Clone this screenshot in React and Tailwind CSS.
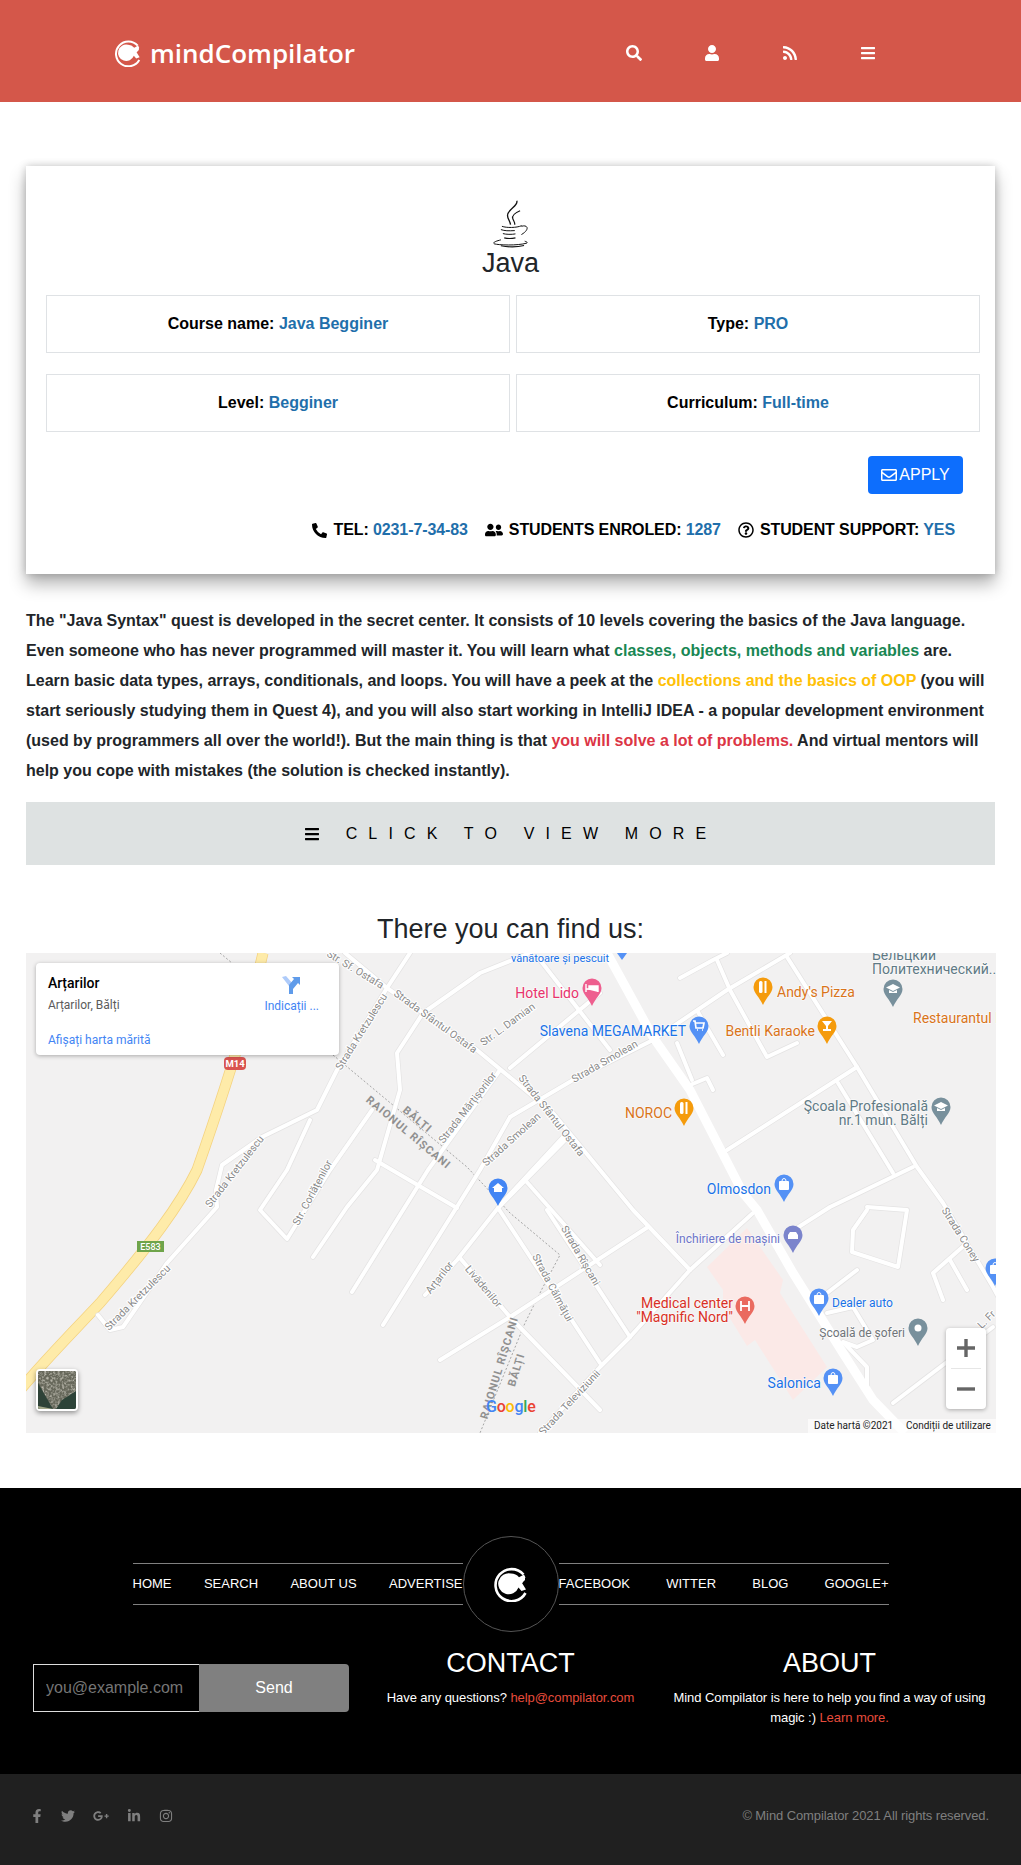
import {
  FaBars,
  FaFacebookF,
  FaGooglePlusG,
  FaInstagram,
  FaLinkedinIn,
  FaPhoneAlt,
  FaRegEnvelope,
  FaRegQuestionCircle,
  FaRss,
  FaSearch,
  FaTwitter,
  FaUser,
  FaUserFriends,
} from "react-icons/fa";

function Logo({ className }) {
  return (
    <svg viewBox="0 0 36 36" className={className}>
      <path
        d="M30.5 8.5A16 16 0 1 0 32.5 27"
        fill="none"
        stroke="#fff"
        strokeWidth="2.6"
      />
      <path d="M18 7.5a10.5 10.5 0 0 1 8 3.7L31 8.5l1.5 3-3.5 3 1 1.5-1 1 4 6.5-4.5 1.5-3-3.5A10.5 10.5 0 1 1 18 7.5z" fill="#fff" />
      <path d="M26 16l6-5v3l-3 3z" fill="#fff" />
    </svg>
  );
}

function JavaLogo() {
  return (
    <svg viewBox="95 20 115 150" className="w-[38px] h-[50px] block mx-auto" fill="none" stroke="#111">
      <path d="M170 28c6 14-28 26-28 44 0 10 8 18 9 28" strokeWidth="4" />
      <path d="M180 58c-14 6-26 14-22 24 2 6 6 10 6 18" strokeWidth="3.5" />
      <path d="M125 105c14 5 44 5 60-2" strokeWidth="3" />
      <path d="M122 115c12 4 22 4 42 3" strokeWidth="3" />
      <path d="M128 127c10 3 26 3 38 1" strokeWidth="3" />
      <path d="M132 140c12 3 24 2 34 0" strokeWidth="3.5" />
      <path d="M184 105c20-6 26 10 0 25" strokeWidth="3" />
      <path d="M122 146c-16 4-26 8-20 12 12 4 70 6 98-2 4-2 0-4-6-6" strokeWidth="3" />
      <path d="M122 164c22 4 50 4 70-1" strokeWidth="3.5" />
    </svg>
  );
}

function Info({ label, value }) {
  return (
    <div className="h-[58px] border border-[#dfe2e5] flex items-center justify-center font-bold text-[16px] text-black">
      <span>
        {label}: <span className="text-[#1f6fab]">{value}</span>
      </span>
    </div>
  );
}

const roads = [
  "M410 953L387 988L337 1070L317 1110L262 1137L222 1165L216 1190L217 1207L167 1263L123 1327L110 1330L98 1315",
  "M310 1120L287 1170L260 1210L287 1239L330 1170L372 1110",
  "M530 953L480 973L423 1013L397 1053L400 1090L377 1170L347 1207L313 1257",
  "M500 1070L428 1170L352 1292",
  "M510 1117L480 1170L383 1325",
  "M375 1160L457 1208",
  "M790 953L727 990L653 1040L573 1080L510 1117",
  "M570 1135L498 1208L457 1260L425 1295",
  "M345 953L387 988L477 1050L553 1113L633 1210L690 1270",
  "M460 1258L510 1317L600 1410",
  "M498 1208L600 1363",
  "M547 1210L630 1337",
  "M440 1360L510 1317L648 1227",
  "M540 1433L600 1367L630 1337L690 1270L753 1213",
  "M600 993L510 1068",
  "M540 960L610 1050",
  "M717 960L730 990L767 1057L797 1043",
  "M680 978L713 960L727 953",
  "M677 1043L692 1080",
  "M690 1085L707 1078L713 1090",
  "M698 1012L723 1055",
  "M857 1067L727 1150",
  "M838 1083L893 1173",
  "M913 1167L830 1207L797 1228",
  "M867 1210L853 1230L852 1252L898 1267L907 1210L867 1207",
  "M967 1243L933 1273L943 1300",
  "M950 1260L967 1290",
  "M857 1270L827 1293",
  "M827 1313L853 1307L873 1340L857 1347L843 1342L867 1367L867 1387",
  "M893 1403L993 1327",
  "M787 957L857 1067L917 1167L943 1203L993 1287L1000 1300",
  "M500 1205L563 1137",
  "M525 1180L600 1265",
];

const labels = [
  ["Str. Sf. Ostafa", 355, 970, 31],
  ["Strada Kretzulescu", 362, 1032, -58],
  ["Strada Sfântul Ostafa", 435, 1022, 36],
  ["Str. L. Damian", 508, 1025, -36],
  ["Strada Smolean", 605, 1062, -30],
  ["Strada Smolean", 512, 1140, -42],
  ["Strada Sfântul Ostafa", 551, 1116, 52],
  ["Strada Mărțișorilor", 468, 1108, -52],
  ["Str. Corlățenilor", 313, 1193, -62],
  ["Strada Kretzulescu", 138, 1298, -45],
  ["Strada Kretzulescu", 235, 1172, -52],
  ["Arțarilor", 440, 1278, -52],
  ["Livădenilor", 483, 1287, 50],
  ["Strada Rîșcani", 580, 1256, 60],
  ["Strada Călmățui", 552, 1288, 62],
  ["Strada Televiziunii", 570, 1403, -47],
  ["Strada Coney", 960, 1235, 58],
  ["L. Fr", 987, 1320, -45],
];

function PinGlyph({ kind, x, y }) {
  if (kind === "H")
    return (
      <path d={`M${x - 4} ${y - 5}v10M${x + 4} ${y - 5}v10M${x - 4} ${y}h8`} stroke="#fff" strokeWidth="1.8" fill="none" />
    );
  if (kind === "food")
    return (
      <g fill="#fff">
        <rect x={x - 4} y={y - 6} width="3.5" height="12" rx="1.5" />
        <rect x={x + 1.5} y={y - 6} width="2" height="12" />
      </g>
    );
  if (kind === "glass") return <path d={`M${x - 5} ${y - 5}h10l-4 5v3h3v2h-8v-2h3v-3z`} fill="#fff" />;
  if (kind === "school") return <path d={`M${x} ${y - 5}l7 3.5-7 3.5-7-3.5zM${x - 4} ${y + 1}l4 2 4-2v3h-8z`} fill="#fff" />;
  if (kind === "shop")
    return (
      <g>
        <rect x={x - 5} y={y - 3} width="10" height="9" rx="1" fill="#fff" />
        <path d={`M${x - 2} ${y - 3}a2 2.5 0 0 1 4 0`} stroke="#fff" fill="none" />
      </g>
    );
  if (kind === "cart") return <path d={`M${x - 6} ${y - 5}h2l1 7h7l1-5h-8M${x - 2} ${y + 4}h1M${x + 3} ${y + 4}h1`} stroke="#fff" strokeWidth="1.7" fill="none" />;
  if (kind === "bed") return <path d={`M${x - 6} ${y - 4}v8M${x - 6} ${y + 1}h12v3M${x - 3} ${y - 2}h9v3h-9z`} stroke="#fff" strokeWidth="1.4" fill="#fff" />;
  if (kind === "car") return <path d={`M${x - 5} ${y + 4}v-4l2-3h6l2 3v4z`} fill="#fff" />;
  if (kind === "home") return <path d={`M${x} ${y - 5}l6 5h-2v4h-8v-4h-2z`} fill="#fff" />;
  return <circle cx={x} cy={y} r="3.5" fill="#fff" />;
}

const pins = [
  [592, 988, "#ee5f8f", "bed"],
  [763, 987, "#f59b0c", "food"],
  [699, 1026, "#5491f5", "cart"],
  [827, 1026, "#f59b0c", "glass"],
  [893, 989, "#78909c", "school"],
  [684, 1108, "#f59b0c", "food"],
  [941, 1107, "#78909c", "school"],
  [784, 1184, "#5491f5", "shop"],
  [793, 1235, "#7b84cc", "car"],
  [745, 1306, "#ea6a5f", "H"],
  [819, 1298, "#5491f5", "shop"],
  [918, 1328, "#78909c", "dot"],
  [833, 1378, "#5491f5", "shop"],
  [995, 1268, "#5491f5", "shop"],
  [498, 1188, "#4285f4", "home"],
];

const places = [
  ["Hotel Lido", 579, 998, "end", "#e8336d", 14],
  ["Andy's Pizza", 777, 997, "start", "#d9741a", 14],
  ["Slavena MEGAMARKET", 686, 1036, "end", "#1a73e8", 14],
  ["Bentli Karaoke", 815, 1036, "end", "#d9741a", 14],
  ["Restaurantul Flora", 913, 1023, "start", "#d9741a", 14],
  ["Бельцкий", 872, 960, "start", "#5f7a85", 14],
  ["Политехнический...", 872, 974, "start", "#5f7a85", 14],
  ["NOROC", 672, 1118, "end", "#d9741a", 14],
  ["Şcoala Profesională", 928, 1111, "end", "#5f7a85", 14],
  ["nr.1 mun. Bălți", 928, 1125, "end", "#5f7a85", 14],
  ["Olmosdon", 771, 1194, "end", "#1a73e8", 14],
  ["Închiriere de mașini", 780, 1243, "end", "#6b74c8", 12],
  ["Medical center", 733, 1308, "end", "#d93025", 14],
  ['"Magnific Nord"', 733, 1322, "end", "#d93025", 14],
  ["Dealer auto", 832, 1307, "start", "#1a73e8", 12],
  ["Școală de șoferi", 905, 1337, "end", "#70757a", 12],
  ["Salonica", 821, 1388, "end", "#1a73e8", 14],
  ["vânătoare și pescuit", 609, 962, "end", "#1a73e8", 11],
];

const highway = "M263 953C250 1010 225 1090 197 1170C180 1205 150 1245 100 1303C70 1335 45 1360 20 1390";

function MapDrawing() {
  return (
    <svg viewBox="26 953 970 480" className="block w-[970px] h-[480px] bg-[#f2f1f1] font-['Roboto',sans-serif]">
      <polygon points="747,1228 783,1280 780,1293 827,1367 793,1400 755,1340 747,1346 723,1307 723,1290 707,1267" fill="#fbe9e7" />
      <path d={highway} fill="none" stroke="#f4d27f" strokeWidth="11" />
      <path d={highway} fill="none" stroke="#feeba9" strokeWidth="9.5" />
      <path d="M220 953L232 963M333 1055L467 1167L510 1213L560 1255L543 1287L525 1323L480 1433" fill="none" stroke="#a5a5a5" strokeWidth="1" strokeDasharray="2 2" />
      {roads.map((d) => (
        <path key={d} d={d} fill="none" stroke="#e4e3e3" strokeWidth="5.4" strokeLinejoin="round" strokeLinecap="round" />
      ))}
      {roads.map((d) => (
        <path key={d + "w"} d={d} fill="none" stroke="#fff" strokeWidth="4" strokeLinejoin="round" strokeLinecap="round" />
      ))}
      <path d="M607 953L653 1037L690 1090L743 1193L757 1210L793 1273L843 1353L873 1400L905 1433" fill="none" stroke="#fff" strokeWidth="9" />
      {labels.map(([text, x, y, angle]) => (
        <text key={text + x} x={x} y={y} transform={`rotate(${angle} ${x} ${y})`} textAnchor="middle" dominantBaseline="middle" fontSize="10.5" fill="#8a8a8a" stroke="#fff" strokeWidth="2" paintOrder="stroke">
          {text}
        </text>
      ))}
      <text x="417" y="1120" transform="rotate(40 417 1120)" textAnchor="middle" dominantBaseline="middle" fontSize="11" fontWeight="700" fill="#909090" letterSpacing="1">BĂLȚI</text>
      <text x="408" y="1133" transform="rotate(40 408 1133)" textAnchor="middle" dominantBaseline="middle" fontSize="11" fontWeight="700" fill="#909090" letterSpacing="1">RAIONUL RÎȘCANI</text>
      <text x="500" y="1368" transform="rotate(-73 500 1368)" textAnchor="middle" dominantBaseline="middle" fontSize="11" fontWeight="700" fill="#909090" letterSpacing="1">RAIONUL RÎȘCANI</text>
      <text x="517" y="1370" transform="rotate(-73 517 1370)" textAnchor="middle" dominantBaseline="middle" fontSize="11" fontWeight="700" fill="#909090" letterSpacing="1">BĂLȚI</text>
      <rect x="224" y="1057" width="22" height="13" rx="4" fill="#d9534f" />
      <text x="235" y="1067" textAnchor="middle" fontSize="9.5" fontWeight="700" fill="#fff">M14</text>
      <rect x="137" y="1241" width="27" height="11" fill="#6fa44a" />
      <text x="150.5" y="1250" textAnchor="middle" fontSize="9" fontWeight="500" fill="#fff">E583</text>
      <path d="M617 953h10l-5 7z" fill="#5491f5" />
      {pins.map(([x, y, color, kind]) => (
        <g key={x + "-" + y}>
          <path d={`M${x - 9.5} ${y}a9.5 9.5 0 1 1 19 0c0 6-6 10-9.5 18c-3.5-8-9.5-12-9.5-18z`} fill={color} />
          <PinGlyph kind={kind} x={x} y={y} />
        </g>
      ))}
      {places.map(([text, x, y, anchor, color, size]) => (
        <text key={text} x={x} y={y} textAnchor={anchor} fontSize={size} fill={color} stroke="#fff" strokeOpacity="0.6" strokeWidth="1.5" paintOrder="stroke">
          {text}
        </text>
      ))}
      <text x="486" y="1412" fontSize="16" fontWeight="500" fontFamily="Roboto" letterSpacing="-0.2">
        <tspan fill="#4285f4">G</tspan>
        <tspan fill="#ea4335">o</tspan>
        <tspan fill="#fbbc05">o</tspan>
        <tspan fill="#4285f4">g</tspan>
        <tspan fill="#34a853">l</tspan>
        <tspan fill="#ea4335">e</tspan>
      </text>
      <rect x="808" y="1419" width="188" height="14" fill="#fff" fillOpacity="0.65" />
      <text x="814" y="1429" fontSize="10" fill="#222">Date hartă ©2021</text>
      <text x="906" y="1429" fontSize="10" fill="#222">Condiții de utilizare</text>
    </svg>
  );
}

export default function App() {
  return (
    <div className="w-[1021px] bg-white text-[#212529] font-['Liberation_Sans',Arial,sans-serif]">
      {/* Header */}
      <header className="h-[102px] pt-1 bg-[#d4574a] flex items-center pl-[114px] pr-[145px] text-white">
        <Logo className="w-[28px] h-[28px]" />
        <span className="ml-[8px] text-[26px] font-semibold font-['Open_Sans',sans-serif]">mindCompilator</span>
        <div className="ml-auto flex items-center gap-[62px]">
          <FaSearch className="w-4 h-4" />
          <FaUser className="w-4 h-4" />
          <FaRss className="w-4 h-4" />
          <FaBars className="w-4 h-4" />
        </div>
      </header>

      {/* Course card */}
      <section className="mt-[64px] mx-[26px] h-[408px] pl-5 pr-[15px] pt-8 bg-white shadow-[0_10px_16px_rgba(0,0,0,0.3),0_0_8px_rgba(0,0,0,0.2)]">
        <div className="pr-[5px]">
          <JavaLogo />
          <h3 className="text-[27px] leading-[34px] text-center -mt-[2px]">Java</h3>
        </div>
        <div className="mt-[15px] grid grid-cols-2 gap-x-[6px] gap-y-[21px]">
          <Info label="Course name" value="Java Begginer" />
          <Info label="Type" value="PRO" />
          <Info label="Level" value="Begginer" />
          <Info label="Curriculum" value="Full-time" />
        </div>
        <div className="mt-6 flex justify-end pr-[17px]">
          <button className="h-[38px] w-[95px] rounded bg-[#0d6efd] text-white text-[16px] flex items-center justify-center gap-[2px]">
            <FaRegEnvelope className="w-4 h-4" />
            APPLY
          </button>
        </div>
        <div className="mt-6 flex justify-end items-center pr-[25px] text-[16px] font-bold text-black tracking-[-0.1px]">
          <FaPhoneAlt className="w-[15px] h-[15px] mr-[6px]" />
          <span>TEL: <span className="text-[#1f6fab]">0231-7-34-83</span></span>
          <FaUserFriends className="w-[18px] h-[18px] ml-[17px] mr-[6px]" />
          <span>STUDENTS ENROLED: <span className="text-[#1f6fab]">1287</span></span>
          <FaRegQuestionCircle className="w-4 h-4 ml-[17px] mr-[6px]" />
          <span>STUDENT SUPPORT: <span className="text-[#1f6fab]">YES</span></span>
        </div>
      </section>

      {/* Description */}
      <p className="mt-8 mx-[26px] text-[16px] leading-[30px] font-bold">
        The "Java Syntax" quest is developed in the secret center. It consists of 10 levels covering the basics of the
        Java language. Even someone who has never programmed will master it. You will learn what{" "}
        <span className="text-[#198754]">classes, objects, methods and variables</span> are. Learn basic data types,
        arrays, conditionals, and loops. You will have a peek at the{" "}
        <span className="text-[#ffc107]">collections and the basics of OOP</span> (you will start seriously studying
        them in Quest 4), and you will also start working in IntelliJ IDEA - a popular development environment (used by
        programmers all over the world!). But the main thing is that{" "}
        <span className="text-[#dc3545]">you will solve a lot of problems.</span> And virtual mentors will help you cope
        with mistakes (the solution is checked instantly).
      </p>

      <div className="mt-4 mx-[26px] h-[63px] bg-[#dee2e2] flex items-center justify-center text-[16px] tracking-[11.15px] text-black">
        <FaBars className="w-4 h-4 mr-[26px]" />
        <span>CLICK TO VIEW MORE</span>
      </div>

      {/* Map */}
      <h3 className="mt-[47px] mb-[7px] text-[27px] leading-[34px] text-center">There you can find us:</h3>
      <div className="relative ml-[26px] w-[970px] h-[480px] overflow-hidden">
        <MapDrawing />
        <div className="absolute left-[10px] top-[10px] w-[303px] h-[92px] bg-white rounded-sm shadow-[0_1px_4px_rgba(0,0,0,0.3)] font-['Roboto',sans-serif]">
          <div className="absolute left-3 top-[10px] text-[14px] font-medium text-black">Arțarilor</div>
          <div className="absolute left-3 top-[33px] text-[12px] text-[#5b5b5b]">Arțarilor, Bălți</div>
          <div className="absolute left-3 top-[68px] text-[12px] text-[#4285f4]">Afișați harta mărită</div>
          <svg viewBox="0 0 20 20" className="absolute left-[245px] top-[12px] w-[20px] h-[20px]">
            <path d="M1 2l4-1 7 8v10H8v-8z" fill="#aecbfa" />
            <path d="M8 19v-9l5-6-2-2h8v8l-2-2-5 6v5z" fill="#5f9bea" />
          </svg>
          <div className="absolute right-[20px] top-[34px] text-[12px] text-[#4285f4]">Indicații ...</div>
        </div>
        <div className="absolute left-[10px] bottom-[22px] w-[42px] h-[42px] border-2 border-white rounded-sm shadow-[0_2px_5px_rgba(0,0,0,0.4)] bg-[#5f6b57] overflow-hidden">
          <svg viewBox="0 0 38 38" className="block w-full h-full">
            <defs>
              <filter id="sat">
                <feTurbulence type="fractalNoise" baseFrequency="0.45" numOctaves="2" seed="4" />
                <feColorMatrix values="0 0 0 0 0.78 0 0 0 0 0.76 0 0 0 0 0.68 1.6 0 0 0 -0.65" />
              </filter>
            </defs>
            <path d="M0 0h38v24L20 38H0z" fill="#66675a" />
            <rect width="38" height="38" filter="url(#sat)" />
            <path d="M0 12l15 26H0z" fill="#2f4338" />
            <path d="M24 29l14-9v18H18z" fill="#2d4338" />
            <path d="M0 35l15 3H0z" fill="#a3a88a" />
          </svg>
        </div>
        <div className="absolute left-[920px] top-[375px] w-10 h-[81px] bg-white rounded-sm shadow-[0_1px_4px_rgba(0,0,0,0.3)] flex flex-col items-center">
          <svg viewBox="0 0 18 18" className="mt-[11px] w-[18px] h-[18px]"><path d="M9 0v18M0 9h18" stroke="#666" strokeWidth="3.4" /></svg>
          <div className="mt-[11px] w-[30px] border-t border-[#e6e6e6]" />
          <svg viewBox="0 0 18 18" className="mt-[11px] w-[18px] h-[18px]"><path d="M0 9h18" stroke="#666" strokeWidth="3.4" /></svg>
        </div>
      </div>

      {/* Footer */}
      <footer className="mt-[55px] h-[286px] bg-black pt-[48px] text-white">
        <div className="flex items-center justify-center">
          <nav className="w-[330px] h-[42px] pb-px border-y border-[#808080] flex items-center justify-between text-[13px]">
            <span>HOME</span>
            <span>SEARCH</span>
            <span>ABOUT US</span>
            <span>ADVERTISE</span>
          </nav>
          <div className="w-[96px] h-[96px] rounded-full border border-[#555] flex items-center justify-center">
            <Logo className="w-[36px] h-[36px]" />
          </div>
          <nav className="w-[330px] h-[42px] pb-px border-y border-[#808080] flex items-center justify-between text-[13px]">
            <span>FACEBOOK</span>
            <span>WITTER</span>
            <span>BLOG</span>
            <span>GOOGLE+</span>
          </nav>
        </div>
        <div className="mt-[14px] px-8 grid grid-cols-3">
          <div className="pt-[18px] px-px">
            <div className="flex h-[48px] text-[16px]">
              <input
                placeholder="you@example.com"
                className="w-[166px] px-3 border border-r-0 border-[#ddd] bg-black text-white placeholder:text-[#757575] outline-none"
              />
              <button className="w-[150px] bg-[#808080] rounded-r text-white">Send</button>
            </div>
          </div>
          <div className="text-center">
            <h3 className="text-[27px] leading-[34px] mb-2">CONTACT</h3>
            <p className="text-[13px] leading-[20px] tracking-[-0.07px]">
              Have any questions? <span className="text-[#e74c3c]">help@compilator.com</span>
            </p>
          </div>
          <div className="text-center">
            <h3 className="text-[27px] leading-[34px] mb-2">ABOUT</h3>
            <p className="text-[13px] leading-[20px] tracking-[-0.07px]">
              Mind Compilator is here to help you find a way of using magic :){" "}
              <span className="text-[#e74c3c]">Learn more.</span>
            </p>
          </div>
        </div>
      </footer>
      <div className="h-[91px] bg-[#202020] pl-[31px] pr-[32px] pb-2 flex items-center justify-between text-[#7f7f7f]">
        <div className="flex items-center gap-[18px]">
          <FaFacebookF className="w-3 h-3.5" />
          <FaTwitter className="w-3.5 h-3.5" />
          <FaGooglePlusG className="w-4 h-4" />
          <FaLinkedinIn className="w-3.5 h-3.5" />
          <FaInstagram className="w-3.5 h-3.5" />
        </div>
        <span className="text-[13px] tracking-[-0.1px]">© Mind Compilator 2021 All rights reserved.</span>
      </div>
    </div>
  );
}
